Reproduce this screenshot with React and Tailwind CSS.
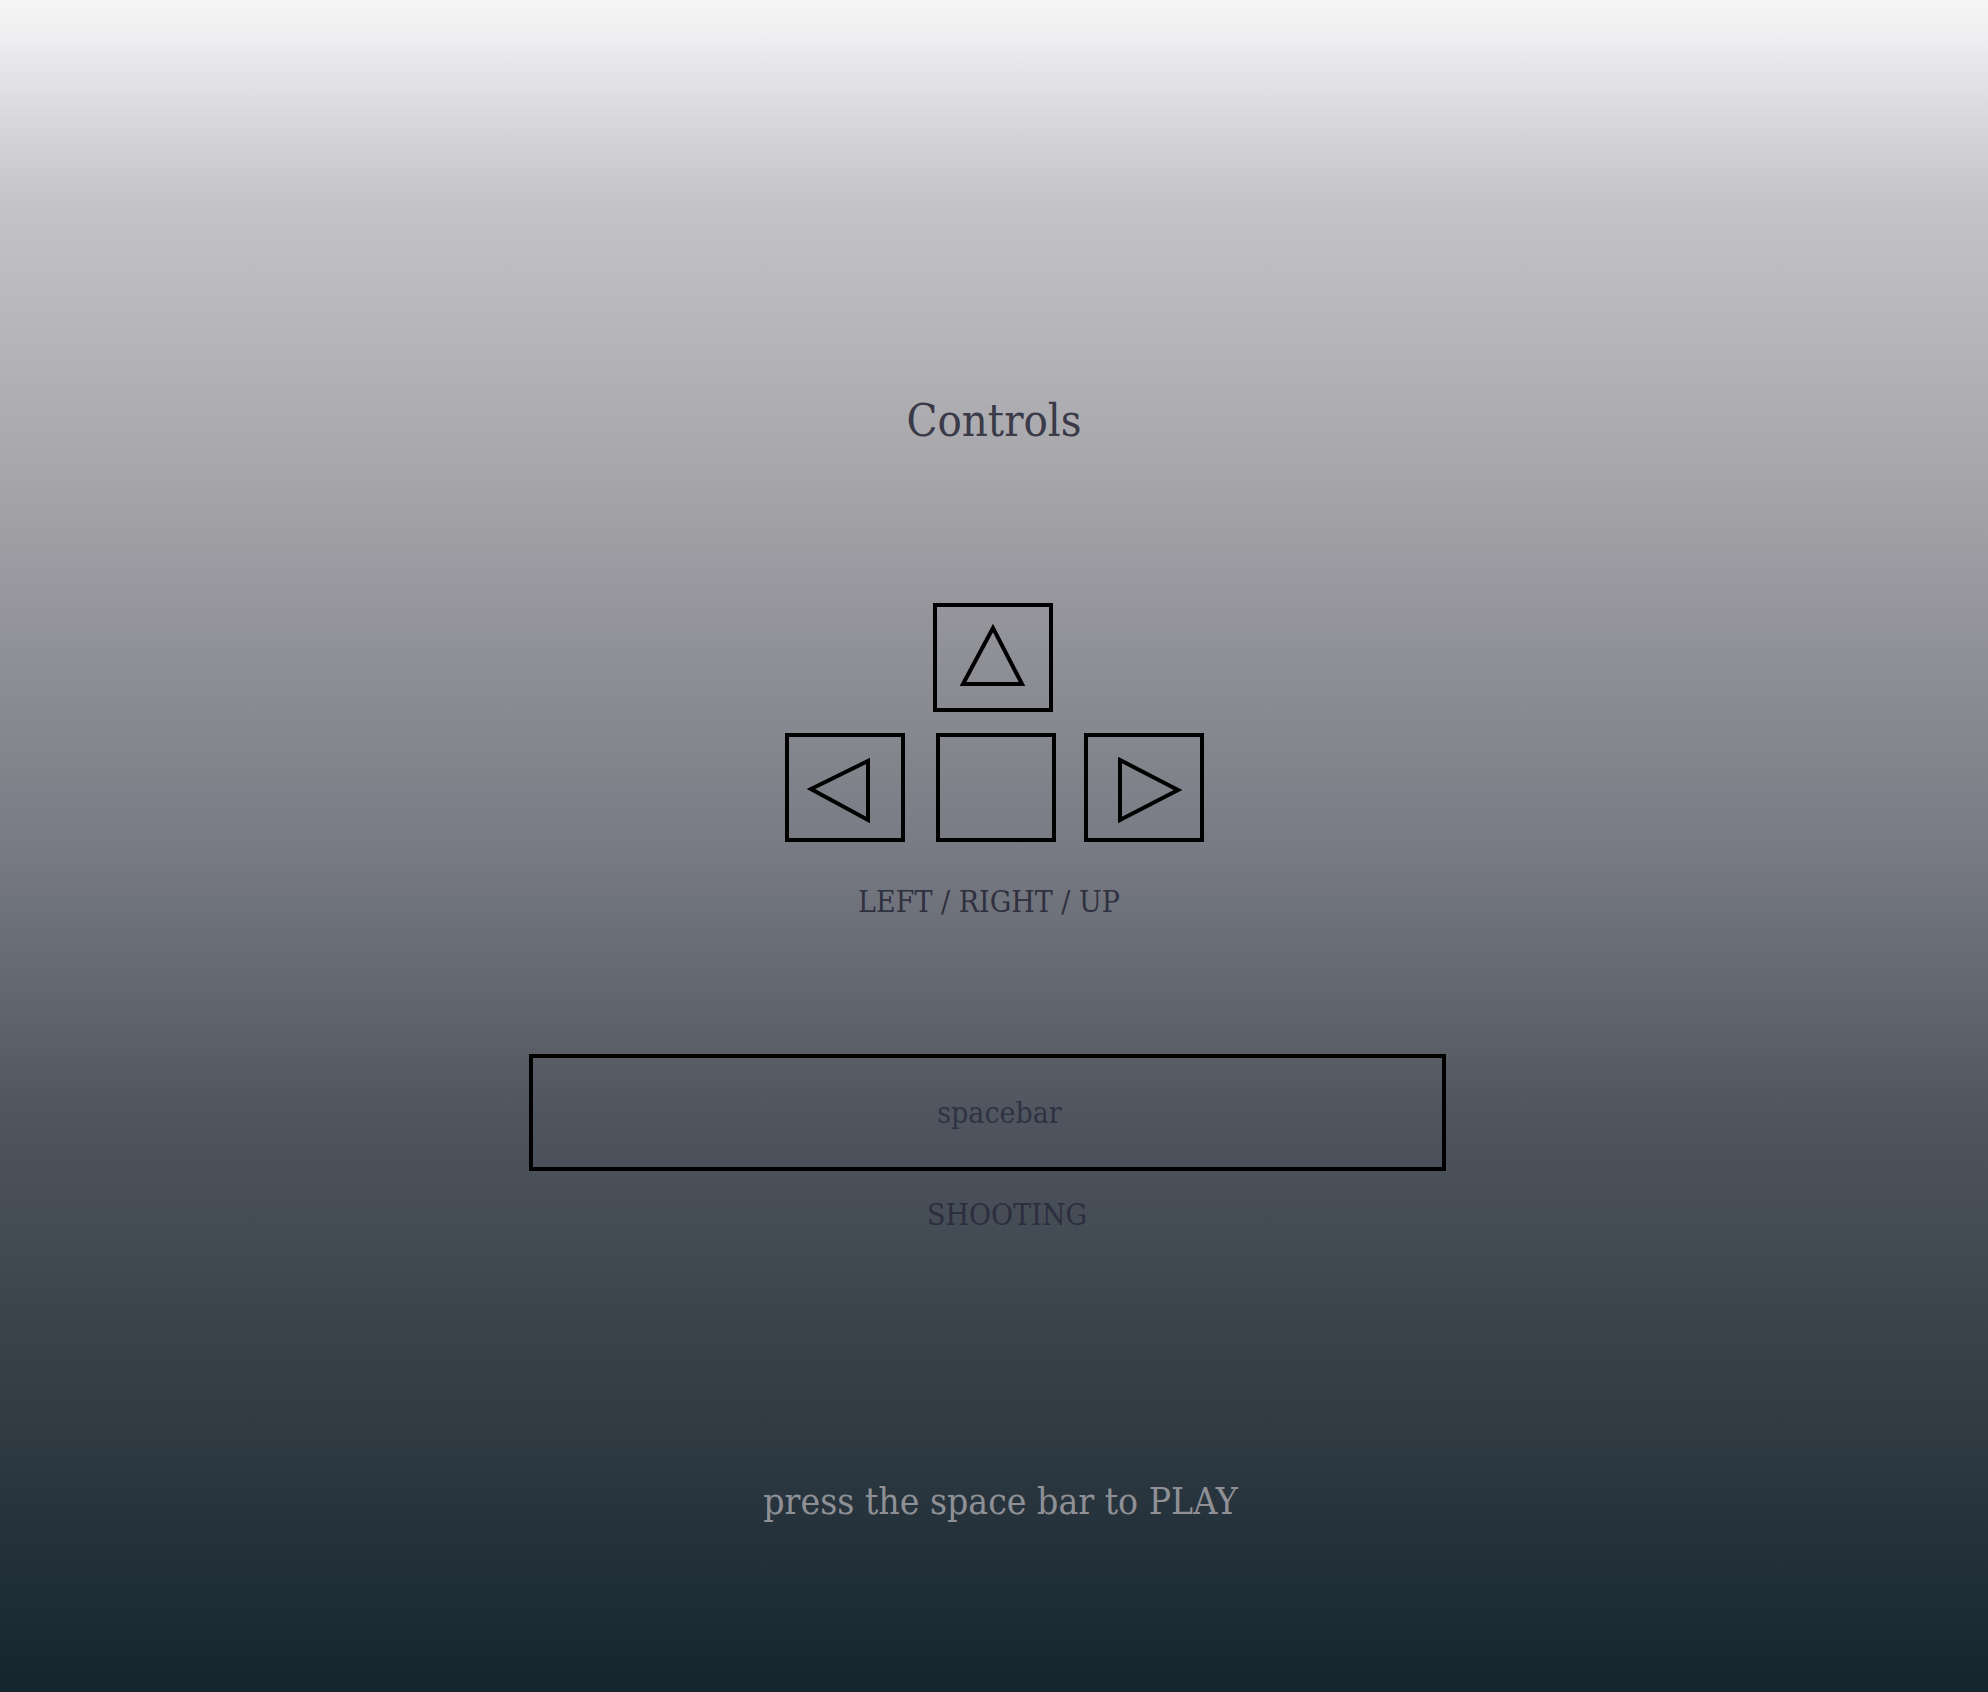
import React from 'react';

const font = "font-['DejaVu_Serif_Condensed','DejaVu_Serif',serif] font-stretch-semi-condensed";

// a single arrow key, the triangle is drawn in inner-box coordinates
const Key = ({ points, className = '' }) => (
  <div className={`w-[120px] h-[109px] border-4 border-black ${className}`}>
    {points && (
      <svg viewBox="0 0 112 101" className="block w-full h-full">
        <polygon points={points} fill="none" stroke="#000" strokeWidth="4" strokeLinejoin="miter" />
      </svg>
    )}
  </div>
);

export default function App() {
  return (
    <div
      className={`min-h-[1692px] w-full flex flex-col items-center bg-[linear-gradient(to_bottom,#f5f5f6_0%,#efeff1_2%,#d4d4d8_8%,#c4c4c8_12%,#acacb0_25%,#8f9096_39%,#787b84_50%,#4f555e_66%,#28343d_89%,#14252e_100%)] ${font}`}
    >
      <h1 className="mt-[398px] text-[45px] leading-none text-[#3a3a48] font-normal">Controls</h1>

      <div className="mt-[160px] flex flex-col items-center gap-[21px]">
        <Key points="56,21 26,77 85,77" className="-ml-[2px]" />
        <div className="flex">
          <Key points="22,52 79,24 79,83" />
          <Key className="ml-[31px]" />
          <Key points="32,23 90,53 32,83" className="ml-[28px]" />
        </div>
      </div>

      <p className="mt-[45px] pr-[10px] text-[30px] leading-none text-[#2f3040]">LEFT / RIGHT / UP</p>

      <div className="mt-[137px] -ml-[13px] w-[917px] h-[117px] border-4 border-black flex items-center justify-center">
        <span className="pl-[24px] text-[30px] leading-none text-[#2f3242]">spacebar</span>
      </div>

      <p className="mt-[29px] pl-[26px] text-[30px] leading-none text-[#2b2e3e]">SHOOTING</p>

      <p className="mt-[253px] pl-[13px] text-[37px] leading-none text-[#8e9096]">press the space bar to PLAY</p>
    </div>
  );
}
